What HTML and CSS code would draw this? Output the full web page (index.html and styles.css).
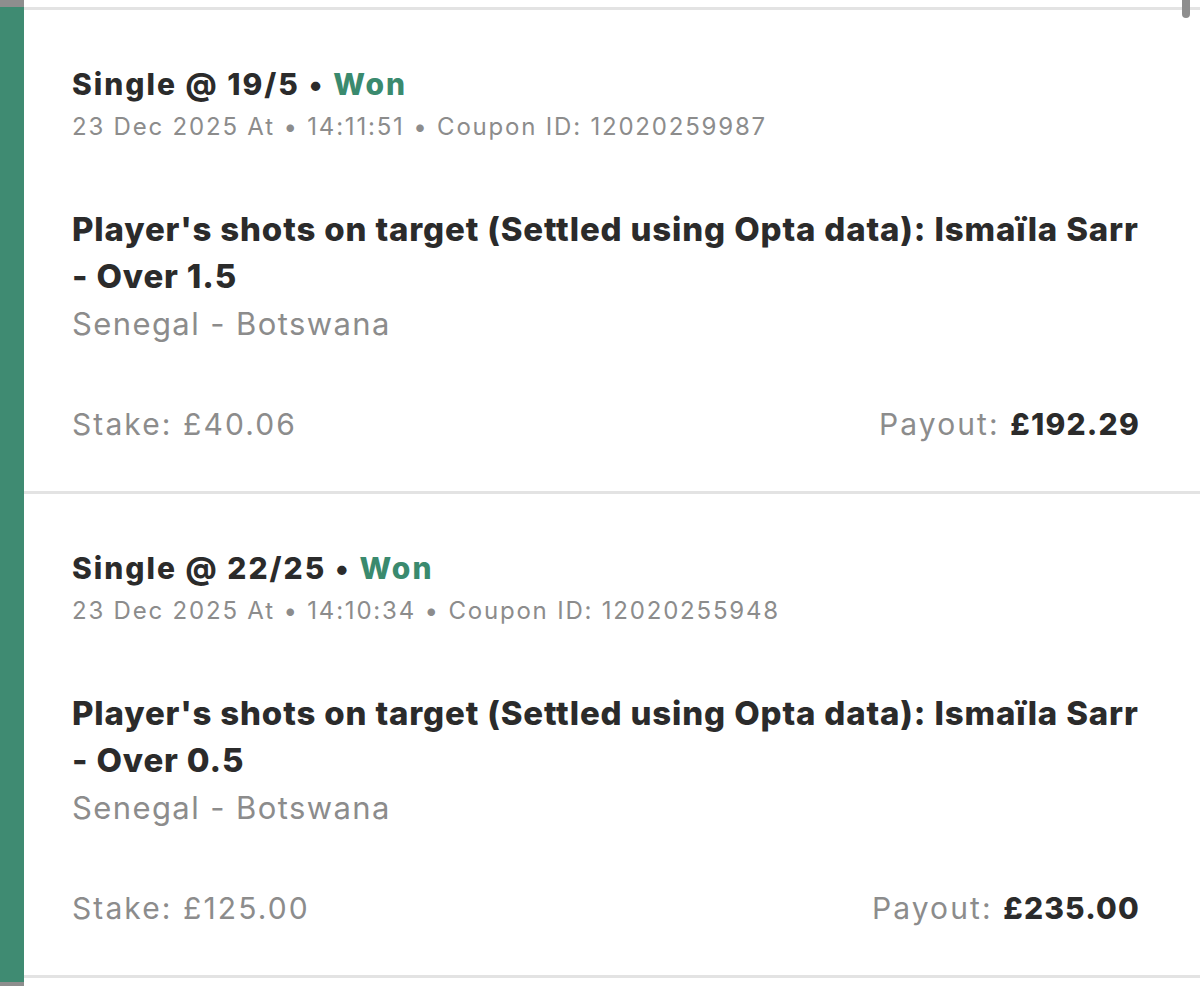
FILE: index.html
```html
<!DOCTYPE html>
<html lang="en">
<head>
<meta charset="utf-8">
<title>Bet history</title>
<link rel="stylesheet" href="styles.css">
</head>
<body>
<div class="page">
  <div class="rail"></div>
  <div class="list">
    <div class="card">
      <div class="heading">Single @ 19/5 <span class="dot">•</span> <span class="won">Won</span></div>
      <div class="meta">23 Dec 2025 At • 14:11:51 • Coupon ID: 12020259987</div>
      <div class="selection">Player's shots on target (Settled using Opta data): Ismaïla Sarr - Over 1.5</div>
      <div class="event">Senegal - Botswana</div>
      <div class="amounts">
        <div class="stake">Stake: £40.06</div>
        <div class="payout">Payout: <b>£192.29</b></div>
      </div>
    </div>
    <div class="card">
      <div class="heading">Single @ 22/25 <span class="dot">•</span> <span class="won">Won</span></div>
      <div class="meta">23 Dec 2025 At • 14:10:34 • Coupon ID: 12020255948</div>
      <div class="selection">Player's shots on target (Settled using Opta data): Ismaïla Sarr - Over 0.5</div>
      <div class="event">Senegal - Botswana</div>
      <div class="amounts">
        <div class="stake">Stake: £125.00</div>
        <div class="payout">Payout: <b>£235.00</b></div>
      </div>
    </div>
  </div>
  <div class="scrollbar"></div>
</div>
</body>
</html>
```

FILE: styles.css
```css
* { box-sizing: border-box; }
html, body { margin: 0; padding: 0; background: #ffffff; }
body {
  font-family: Inter, "Liberation Sans", Arial, sans-serif;
  color: #2b2b2b;
  width: 1200px;
  height: 986px;
  overflow: hidden;
}
.page {
  display: flex;
  height: 986px;
  position: relative;
}
.rail {
  width: 24px;
  flex: none;
  background: linear-gradient(to bottom, #8e8e8e 0, #8e8e8e 7px, #3f8b72 7px, #3f8b72 982px, #8e8e8e 982px);
}
.list {
  flex: 1;
  display: flex;
  flex-direction: column;
  padding-top: 7px;
}
.card {
  border-top: 3px solid #e3e3e3;
  padding: 56px 60px 47px 48px;
}
.card:last-child { border-bottom: 3px solid #e3e3e3; }
.heading {
  font-size: 30px;
  line-height: 36px;
  font-weight: 800;
  letter-spacing: 2px;
  color: #2b2b2b;
}
.dot { font-weight: 700; }
.won { color: #3a8a6e; }
.meta {
  margin-top: 9px;
  font-size: 24px;
  line-height: 32px;
  letter-spacing: 1.8px;
  color: #8c8c8c;
}
.selection {
  margin-top: 63px;
  font-size: 33px;
  line-height: 47px;
  font-weight: 800;
  letter-spacing: 0.85px;
  color: #2b2b2b;
}
.event {
  margin-top: 4px;
  font-size: 31px;
  line-height: 40px;
  letter-spacing: 1.4px;
  color: #8c8c8c;
}
.amounts {
  margin-top: 60px;
  display: flex;
  justify-content: space-between;
  font-size: 30px;
  line-height: 40px;
  letter-spacing: 2.1px;
  color: #8c8c8c;
}
.payout b { color: #2b2b2b; font-weight: 800; letter-spacing: 1.2px; }
.scrollbar {
  position: absolute;
  top: 0;
  left: 1182px;
  width: 8px;
  height: 18px;
  border-radius: 0 0 4px 4px;
  background: #8e8e8e;
}
```
